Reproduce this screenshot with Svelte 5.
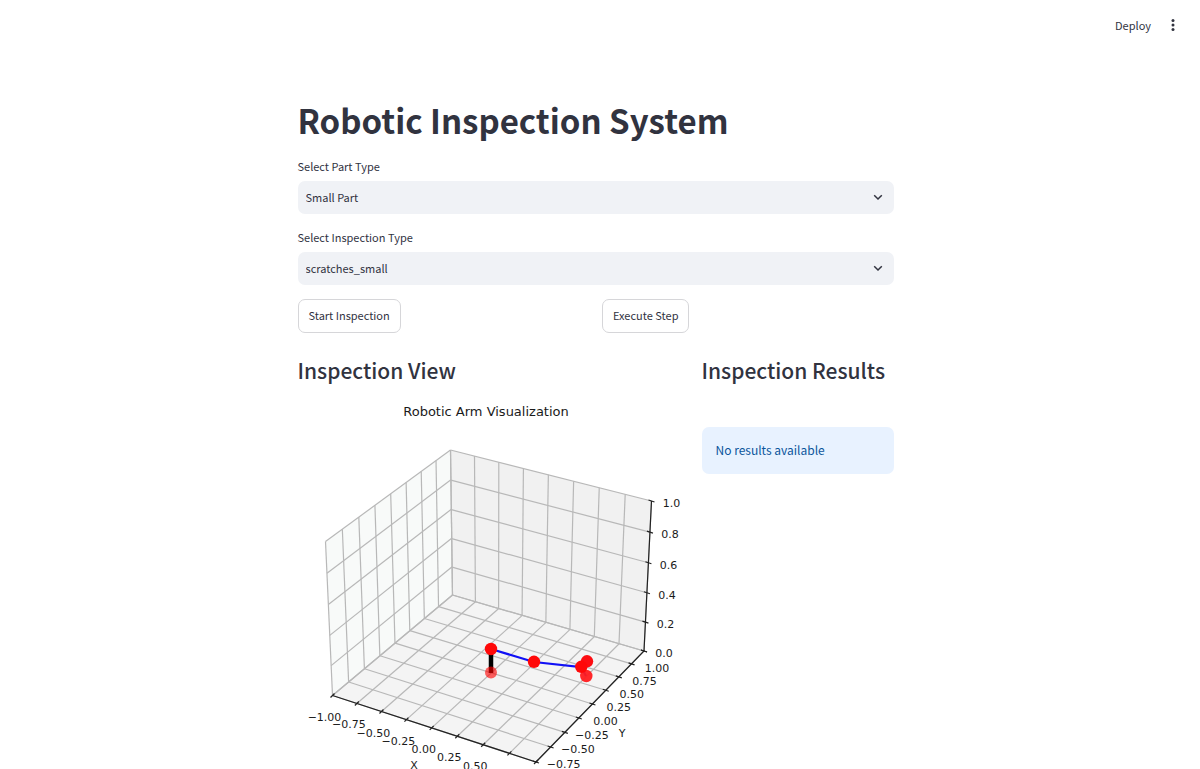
<script>
  let part = $state('Small Part');
  let inspection = $state('scratches_small');

  // Perspective mapping from the unit square to a four-cornered pane
  function pane([x0, y0], [x1, y1], [x2, y2], [x3, y3]) {
    const dx1 = x1 - x2, dx2 = x3 - x2, sx = x0 - x1 + x2 - x3;
    const dy1 = y1 - y2, dy2 = y3 - y2, sy = y0 - y1 + y2 - y3;
    const det = dx1 * dy2 - dx2 * dy1;
    const g = (sx * dy2 - dx2 * sy) / det;
    const h = (dx1 * sy - sx * dy1) / det;
    return (u, v) => {
      const w = g * u + h * v + 1;
      return [
        ((x1 - x0 + g * x1) * u + (x3 - x0 + h * x3) * v + x0) / w,
        ((y1 - y0 + g * y1) * u + (y3 - y0 + h * y3) * v + y0) / w
      ];
    };
  }

  const a = [332.5, 695.5], b = [536, 762], c = [644, 651], d = [452.5, 595];
  const aTop = [325.5, 541.5], cTop = [651.5, 501], dTop = [450.5, 450];
  const points = (...p) => p.map((q) => q.join(',')).join(' ');

  const floor = pane(a, b, c, d);
  const left = pane(a, d, dTop, aTop);
  const back = pane(d, c, cTop, dTop);

  const grid = [];
  for (let i = 0; i <= 8; i++) {
    const t = i / 8;
    grid.push([floor(t, 0), floor(t, 1)], [floor(0, t), floor(1, t)]);
    grid.push([left(t, 0), left(t, 1)], [back(t, 0), back(t, 1)]);
  }
  for (let i = 0; i <= 5; i++) {
    const t = i / 5;
    grid.push([left(0, t), left(1, t)], [back(0, t), back(1, t)]);
  }

  const names = ['−1.00', '−0.75', '−0.50', '−0.25', '0.00', '0.25', '0.50', '0.75', '1.00'];
  const ticks = [
    ...names.map((name, i) => {
      const [x, y] = floor(i / 8, 0);
      return { name, x, y, dx: 2, dy: -2, tx: x - 8, ty: y + 25 };
    }),
    ...names.map((name, i) => {
      const [x, y] = floor(1, i / 8);
      return { name, x, y, dx: 3, dy: 1, tx: x + 13, ty: y + 21 };
    }),
    ...['0.0', '0.2', '0.4', '0.6', '0.8', '1.0'].map((name, i) => {
      const [x, y] = back(1, i / 5);
      return { name, x, y, dx: 3, dy: 1, tx: x + 20, ty: y + 6 };
    })
  ];
</script>

<header>
  <button class="deploy">Deploy</button>
  <button class="menu" aria-label="Main menu">
    <svg viewBox="0 0 16 16"><circle cx="8" cy="3.5" r="1.5" /><circle cx="8" cy="8" r="1.5" /><circle cx="8" cy="12.5" r="1.5" /></svg>
  </button>
</header>

<main>
  <div class="page">
    <h1>Robotic Inspection System</h1>

    <div class="field">
      <label for="part">Select Part Type</label>
      <div class="select">
        <select id="part" bind:value={part}><option>Small Part</option></select>
        <svg viewBox="0 0 10 10"><path d="M1.2 3.2 5 7 8.8 3.2" /></svg>
      </div>
    </div>
    <div class="field">
      <label for="inspection">Select Inspection Type</label>
      <div class="select">
        <select id="inspection" bind:value={inspection}><option>scratches_small</option></select>
        <svg viewBox="0 0 10 10"><path d="M1.2 3.2 5 7 8.8 3.2" /></svg>
      </div>
    </div>

    <div class="actions">
      <div><button>Start Inspection</button></div>
      <div><button>Execute Step</button></div>
    </div>

    <div class="columns">
      <section>
        <h2>Inspection View</h2>
        <svg class="plot" viewBox="298 396 384 396">
          <text class="title" x="486" y="416">Robotic Arm Visualization</text>
          <polygon points={points(a, d, dTop, aTop)} fill="#f8faf9" />
          <polygon points={points(d, c, cTop, dTop)} fill="#f1f1f1" />
          <polygon points={points(a, b, c, d)} fill="#f4f4f4" />
          {#each grid as [p, q]}
            <line x1={p[0]} y1={p[1]} x2={q[0]} y2={q[1]} stroke="#b8b8b8" stroke-width="1.2" />
          {/each}
          <polyline points={points(a, b, c, cTop)} fill="none" stroke="#222" stroke-width="1.2" />
          {#each ticks as t}
            <line x1={t.x - t.dx} y1={t.y - t.dy} x2={t.x + t.dx} y2={t.y + t.dy} stroke="#222" stroke-width="1.2" />
            <text x={t.tx} y={t.ty}>{t.name}</text>
          {/each}
          <text x="414" y="769">X</text>
          <text x="622" y="737">Y</text>
          <path d="M491 650V673" stroke="#000" stroke-width="4.5" />
          <circle cx="491" cy="672.5" r="6" fill="red" fill-opacity=".62" />
          <path d="M491 649 534 662 581 667 587 661M581 667 586 676" fill="none" stroke="#1010f5" stroke-width="2.2" />
          <circle cx="491" cy="649" r="6.2" fill="#ff0808" />
          <circle cx="534" cy="661.8" r="6.2" fill="#ff0808" />
          <circle cx="587" cy="661.3" r="6.2" fill="#fd0d12" />
          <circle cx="586.3" cy="676" r="6.2" fill="#ff1c1f" fill-opacity=".95" />
          <circle cx="581.3" cy="666.8" r="6.2" fill="#ff0808" />
        </svg>
      </section>
      <section>
        <h2>Inspection Results</h2>
        <div class="notice" role="status">No results available</div>
      </section>
    </div>
  </div>
</main>

<style>
  :global(body) {
    margin: 0;
    background: #fff;
    color: #31333f;
    font-family: "Noto Sans CJK SC", "Noto Sans", sans-serif;
    font-size: 11px;
    line-height: 18px;
  }
  header {
    position: fixed;
    top: 0;
    right: 0;
    left: 0;
    display: flex;
    align-items: center;
    justify-content: flex-end;
    gap: 14px;
    height: 50px;
    padding-right: 19px;
    background: #fff;
  }
  button, select {
    font: inherit;
    color: inherit;
  }
  header button {
    padding: 0;
    border: 0;
    background: none;
  }
  .menu svg {
    display: block;
    width: 16px;
    height: 16px;
    fill: #31333f;
  }
  main {
    box-sizing: border-box;
    height: 100vh;
    padding: 96px 9px 0 0;
    overflow-y: auto;
    scrollbar-width: none;
  }
  .page {
    max-width: 596px;
    margin: 0 auto;
    padding-bottom: 80px;
  }
  h1, h2 {
    margin: 0;
    font-weight: 700;
  }
  h1 {
    margin-bottom: 13px;
    font-size: 33px;
    line-height: 48px;
  }
  h2 {
    font-size: 21px;
    font-weight: 500;
    line-height: 28px;
  }
  .field {
    margin-bottom: 14px;
  }
  label {
    display: block;
    margin-bottom: 6px;
  }
  .select {
    position: relative;
  }
  select {
    display: block;
    width: 100%;
    height: 33px;
    padding: 0 32px 2px 8px;
    border: 0;
    border-radius: 7px;
    background: #f0f2f6;
    appearance: none;
  }
  .select svg {
    position: absolute;
    top: 11px;
    right: 11px;
    width: 10px;
    height: 10px;
    fill: none;
    stroke: #31333f;
    stroke-width: 1.5;
    pointer-events: none;
  }
  .actions {
    display: grid;
    grid-template-columns: 1fr 1fr;
    gap: 13px;
    margin-bottom: 23px;
  }
  .actions button {
    display: block;
    height: 34px;
    padding: 0 10px 2px;
    border: 1px solid #d6d6d9;
    border-radius: 7px;
    background: #fff;
  }
  .columns {
    display: grid;
    grid-template-columns: 2fr 1fr;
    gap: 20px;
  }
  section {
    min-width: 0;
  }
  section h2 {
    margin-bottom: 12px;
    white-space: nowrap;
  }
  .plot {
    display: block;
    width: 100%;
    font-family: "DejaVu Sans", sans-serif;
    font-size: 11px;
    text-anchor: middle;
    fill: #1a1a1a;
  }
  .title {
    font-size: 13px;
  }
  .notice {
    margin-top: 43px;
    padding: 13px 14px 15px;
    border-radius: 7px;
    background: #e8f2ff;
    color: #0b559c;
    font-size: 12px;
    line-height: 19px;
  }
</style>
